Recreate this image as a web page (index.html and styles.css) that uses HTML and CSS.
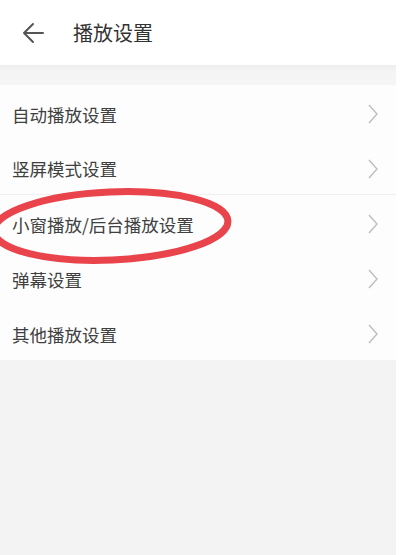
FILE: index.html
```html
<!DOCTYPE html>
<html lang="zh-CN">
<head>
<meta charset="utf-8">
<link rel="stylesheet" href="styles.css">
</head>
<body>
<div class="page">
  <header class="topbar">
    <svg class="back" viewBox="0 0 22 22" width="22" height="22">
      <path d="M21 11H2M11 2L2 11l9 9" fill="none" stroke="#555" stroke-width="2" stroke-linecap="round" stroke-linejoin="round"/>
    </svg>
    <h1 class="title">播放设置</h1>
  </header>
  <div class="band"></div>
  <ul class="list">
    <li class="row"><span>自动播放设置</span><svg class="chev" viewBox="0 0 10 20" width="10" height="20"><path d="M1 1l8 9-8 9" fill="none" stroke="#bdbdbd" stroke-width="1.4"/></svg></li>
    <li class="row divided"><span>竖屏模式设置</span><svg class="chev" viewBox="0 0 10 20" width="10" height="20"><path d="M1 1l8 9-8 9" fill="none" stroke="#bdbdbd" stroke-width="1.4"/></svg></li>
    <li class="row"><span>小窗播放/后台播放设置</span><svg class="chev" viewBox="0 0 10 20" width="10" height="20"><path d="M1 1l8 9-8 9" fill="none" stroke="#bdbdbd" stroke-width="1.4"/></svg></li>
    <li class="row"><span>弹幕设置</span><svg class="chev" viewBox="0 0 10 20" width="10" height="20"><path d="M1 1l8 9-8 9" fill="none" stroke="#bdbdbd" stroke-width="1.4"/></svg></li>
    <li class="row"><span>其他播放设置</span><svg class="chev" viewBox="0 0 10 20" width="10" height="20"><path d="M1 1l8 9-8 9" fill="none" stroke="#bdbdbd" stroke-width="1.4"/></svg></li>
  </ul>
  <div class="rest"></div>
  <svg class="circle" viewBox="0 0 260 90" width="260" height="90">
    <ellipse cx="125" cy="44" rx="117" ry="34" fill="none" stroke="#e9434b" stroke-width="7" transform="rotate(-2.5 125 44)"/>
  </svg>
</div>
</body>
</html>
```
FILE: styles.css
```css
html, body {
  margin: 0;
  padding: 0;
  background: #ffffff;
}
body {
  font-family: "Noto Sans CJK SC", "Noto Sans", sans-serif;
  color: #3c3c3c;
}
.page {
  position: relative;
  width: 396px;
  height: 555px;
  display: flex;
  flex-direction: column;
  background: #f3f3f3;
  overflow: hidden;
}
.topbar {
  height: 65px;
  background: #fff;
  display: flex;
  align-items: center;
  padding-left: 22px;
  box-sizing: border-box;
}
.back {
  display: block;
}
.title {
  margin: 0 0 0 29px;
  font-size: 20px;
  font-weight: 400;
  color: #333;
  line-height: 1;
}
.band {
  height: 20px;
  background: linear-gradient(#ededed, #f4f4f4 30%, #f6f6f6);
}
.list {
  list-style: none;
  margin: 0;
  padding: 0;
  background: #fdfdfd;
}
.row {
  height: 55px;
  display: flex;
  align-items: center;
  justify-content: space-between;
  padding: 3px 18px 0 12px;
  box-sizing: border-box;
  font-size: 17.5px;
  color: #404040;
}
.divided {
  border-bottom: 1px solid #efefef;
}
.chev {
  display: block;
}
.rest {
  flex: 1;
  background: #f3f3f3;
}
.circle {
  position: absolute;
  left: -14px;
  top: 182px;
}
```
